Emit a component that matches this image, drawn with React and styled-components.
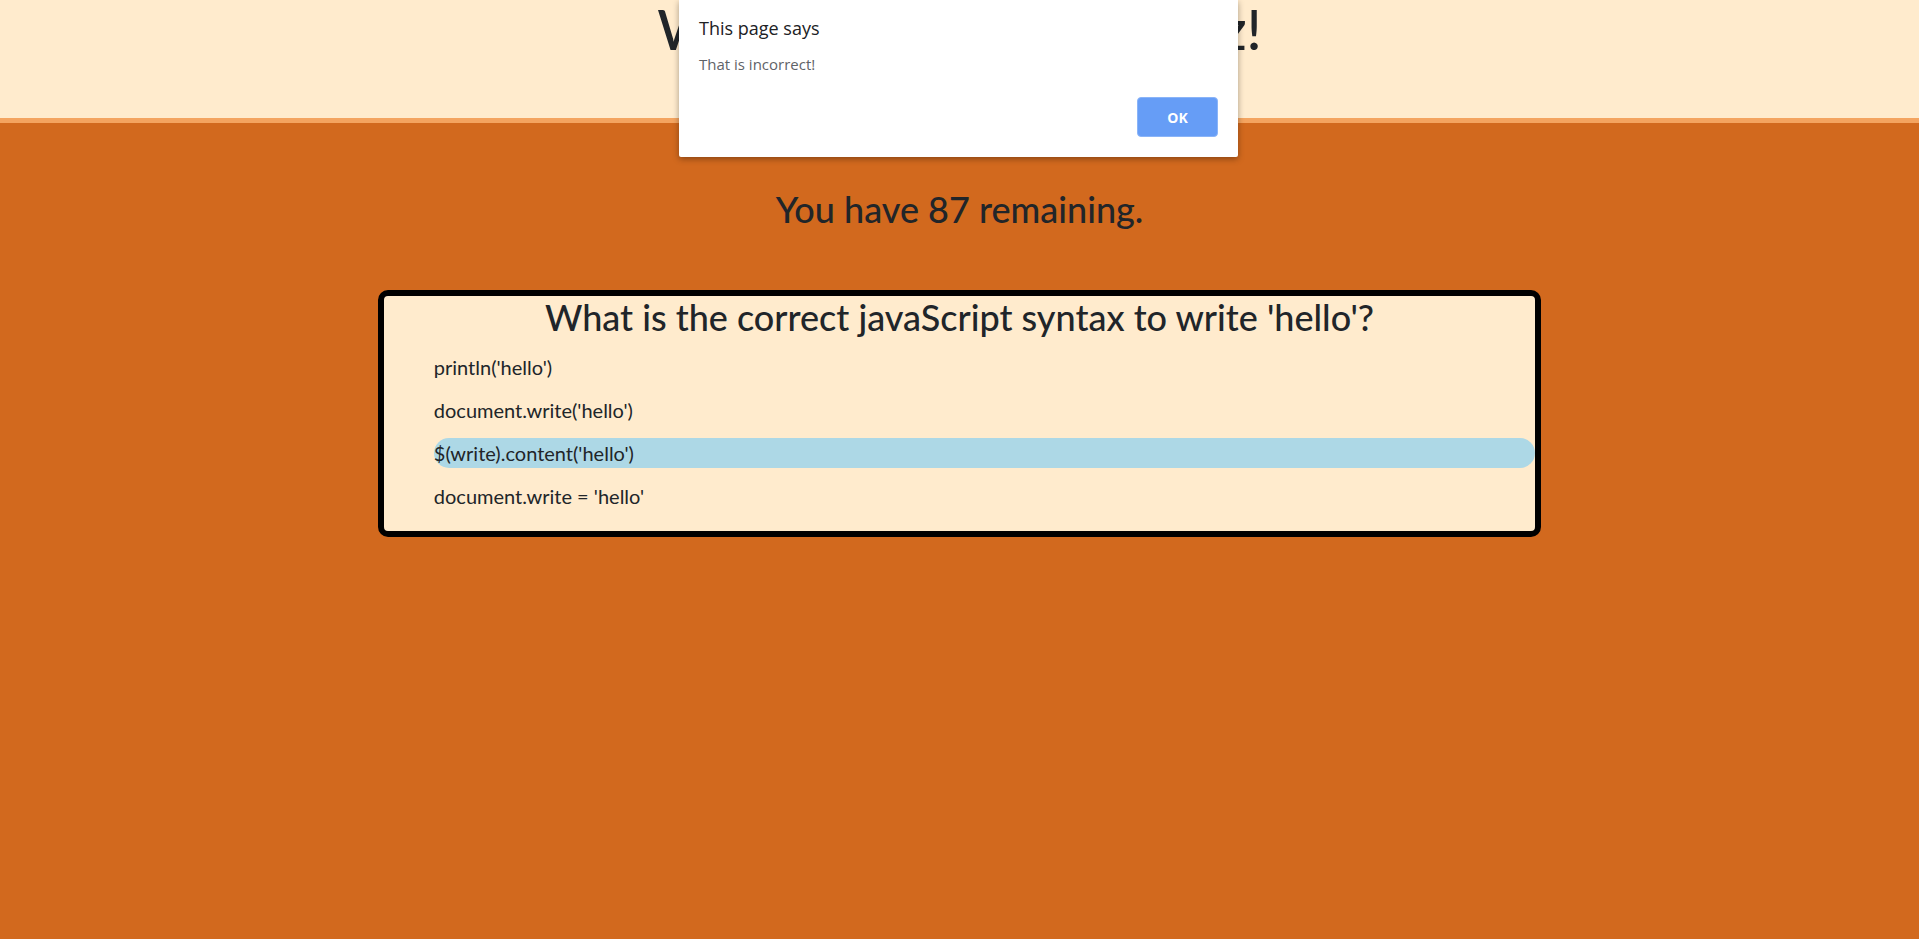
import React from "react";
import styled, { createGlobalStyle } from "styled-components";

const GlobalStyle = createGlobalStyle`
  html, body { margin: 0; padding: 0; }
  body {
    background: #d2691e;
    font-family: Lato, "Noto Sans", sans-serif;
    color: #212529;
    min-height: 939px;
  }
`;

const Page = styled.div`
  position: relative;
  min-height: 939px;
`;

const Header = styled.header`
  background: #ffebcd;
  height: 118px;
  border-bottom: 5px solid #f4a460;
  display: flex;
  justify-content: center;
`;

const Title = styled.h1`
  margin: 0;
  padding-top: 0;
  font-size: 56px;
  font-weight: 500;
  line-height: 58px;
`;

const Main = styled.main`
  display: flex;
  flex-direction: column;
  align-items: center;
`;

const Remaining = styled.h2`
  margin: 65px 0 59px;
  font-size: 36px;
  font-weight: 500;
  line-height: 1.2;
`;

const Card = styled.section`
  width: 60%;
  background: #ffebcd;
  border: 6px solid #000;
  border-radius: 10px;
  padding: 0 0 20px;
`;

const Question = styled.h3`
  margin: 0;
  text-align: center;
  font-size: 36px;
  font-weight: 500;
  line-height: 1.2;
`;

const Options = styled.ul`
  list-style: none;
  margin: 13px 0 0;
  padding: 0 0 0 50px;
  display: flex;
  flex-direction: column;
  gap: 13px;
`;

const Option = styled.li`
  font-size: 20px;
  line-height: 30px;
  border-radius: 15px;
  background: ${(p) => (p.$active ? "#add8e6" : "transparent")};
`;

const Dialog = styled.div`
  position: absolute;
  top: 0;
  left: 679px;
  width: 559px;
  height: 157px;
  box-sizing: border-box;
  background: #fff;
  border-radius: 0 0 2px 2px;
  box-shadow: 0 2px 6px rgba(0, 0, 0, 0.35);
  padding: 16px 20px 0;
  font-family: "Open Sans", "Noto Sans", sans-serif;
`;

const DialogTitle = styled.div`
  font-size: 18px;
  color: #202124;
  line-height: 24px;
`;

const DialogMessage = styled.div`
  margin-top: 14px;
  font-size: 15px;
  color: #5f6368;
  line-height: 20px;
`;

const DialogFooter = styled.div`
  display: flex;
  justify-content: flex-end;
  margin-top: 23px;
`;

const OkButton = styled.button`
  width: 81px;
  height: 40px;
  border: 1px solid #8ab4f8;
  border-radius: 4px;
  background: #669df6;
  color: #fff;
  font-family: "Open Sans", "Noto Sans", sans-serif;
  font-weight: 700;
  font-size: 14px;
`;

const options = [
  "println('hello')",
  "document.write('hello')",
  "$(write).content('hello')",
  "document.write = 'hello'",
];

export default function App() {
  return (
    <Page>
      <GlobalStyle />
      <Header>
        <Title>Welcome to the JS Quiz!</Title>
      </Header>
      <Main>
        <Remaining>You have 87 remaining.</Remaining>
        <Card>
          <Question>What is the correct javaScript syntax to write 'hello'?</Question>
          <Options>
            {options.map((o, i) => (
              <Option key={o} $active={i === 2}>
                {o}
              </Option>
            ))}
          </Options>
        </Card>
      </Main>
      <Dialog>
        <DialogTitle>This page says</DialogTitle>
        <DialogMessage>That is incorrect!</DialogMessage>
        <DialogFooter>
          <OkButton>OK</OkButton>
        </DialogFooter>
      </Dialog>
    </Page>
  );
}
